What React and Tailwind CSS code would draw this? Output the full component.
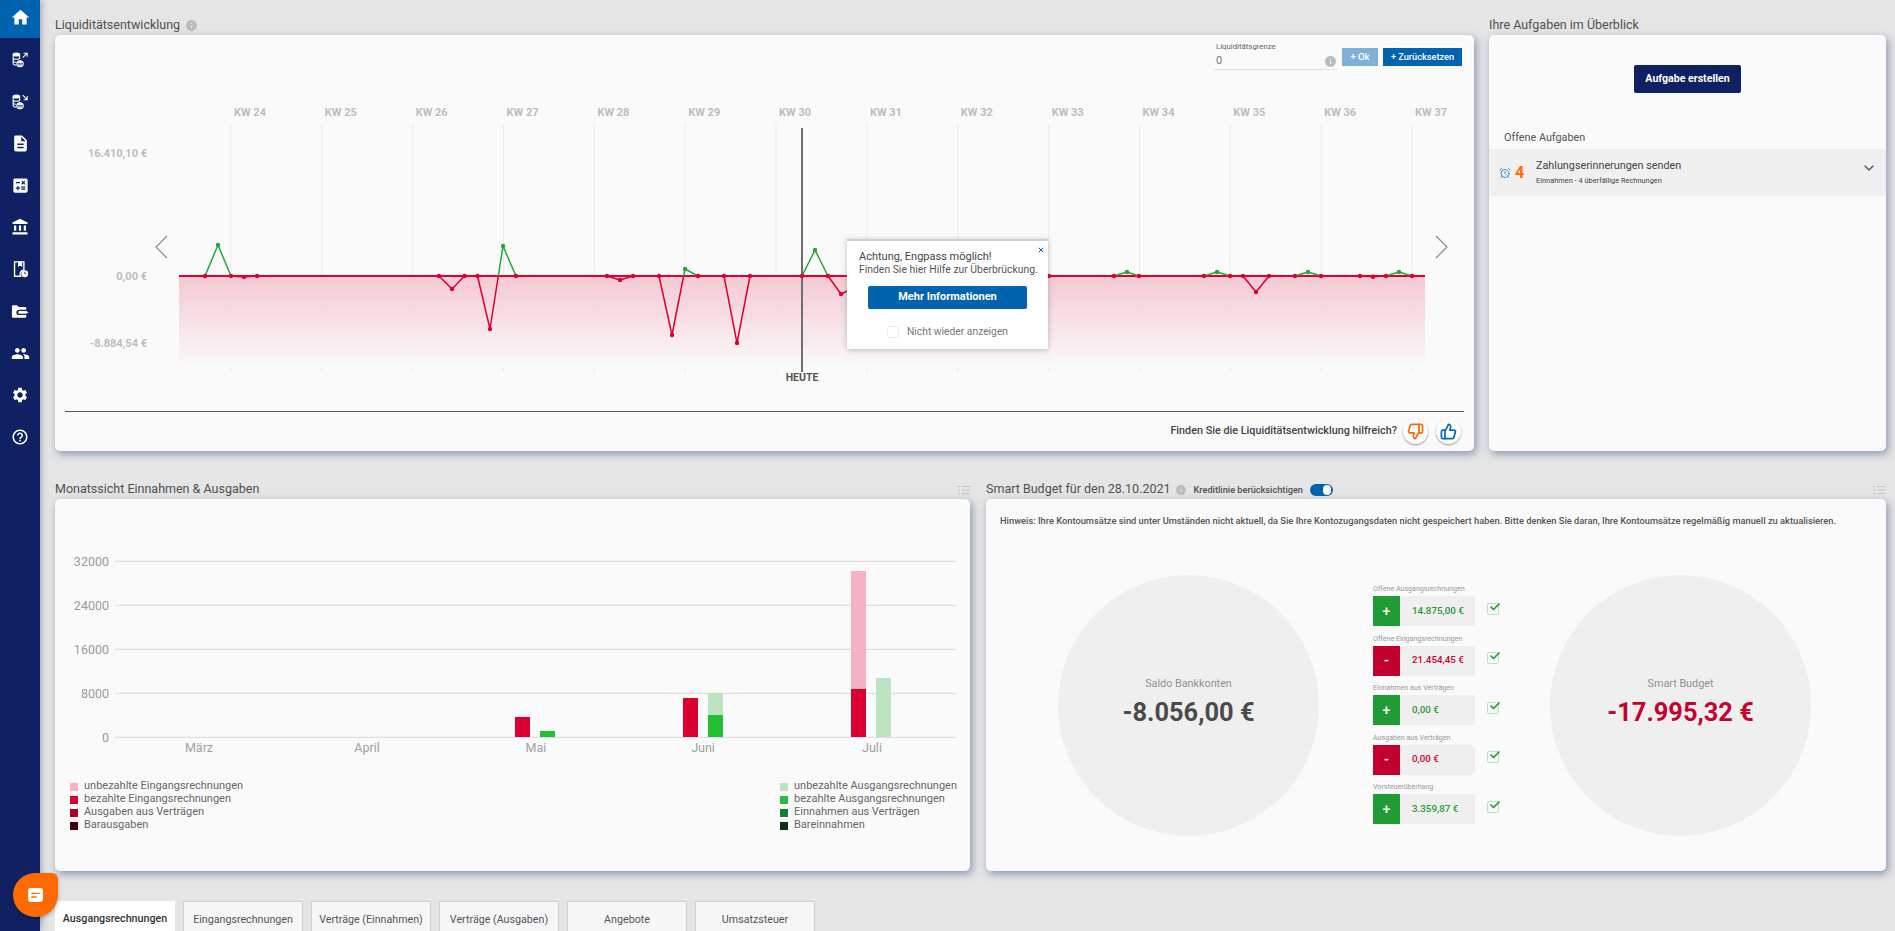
import { ThumbsDown, ThumbsUp, ChevronDown, AlarmClock, Check, X } from "lucide-react";
import {
    MdHome,
    MdDescription,
    MdCalculate,
    MdAccountBalance,
    MdPeople,
    MdSettings,
    MdHelpOutline,
    MdInfo,
} from "react-icons/md";

const ZERO = 276;
const RED = "#dc0032";
const GREEN = "#22a83a";

// Tagespunkte der Liquiditätskurve, jede Gruppe ist ein Linienzug
const curves = [
    [[205, 276], [218, 245], [231, 276], [244, 277], [257, 276]],
    [[439, 276], [452, 289], [464.5, 276], [477.5, 276], [490, 329], [503, 246], [516, 276]],
    [[607, 276], [620, 280], [633, 276]],
    [[659, 276], [672, 335], [685, 269], [698, 276]],
    [[724, 276], [737, 343], [750, 276]],
    [[802, 276], [815, 250], [828, 276], [841, 294], [854, 288], [867, 276]],
    [[1049, 276]],
    [[1114, 276], [1127, 272], [1139, 276]],
    [[1204, 276], [1217, 272], [1230, 276], [1243, 276], [1256, 292], [1269, 276]],
    [[1295, 276], [1308, 272], [1321, 276]],
    [[1360, 276], [1373, 276.7], [1386, 276], [1399, 272], [1412, 276]],
];

function segments(curve) {
    const out = [];
    for (let i = 0; i < curve.length - 1; i++) {
        const [x1, y1] = curve[i];
        const [x2, y2] = curve[i + 1];
        if ((y1 - ZERO) * (y2 - ZERO) < 0) {
            const xm = x1 + ((ZERO - y1) / (y2 - y1)) * (x2 - x1);
            out.push({ x1, y1, x2: xm, y2: ZERO, up: y1 < ZERO });
            out.push({ x1: xm, y1: ZERO, x2, y2, up: y2 < ZERO });
        } else {
            out.push({ x1, y1, x2, y2, up: y1 < ZERO || y2 < ZERO });
        }
    }
    return out;
}

const weeks = [24, 25, 26, 27, 28, 29, 30, 31, 32, 33, 34, 35, 36, 37];

function LiquidityChart() {
    return (
        <svg viewBox="55 100 1419 285" className="block w-[1419px] h-[285px]">
            <defs>
                <linearGradient id="area" x1="0" y1="0" x2="0" y2="1">
                    <stop offset="0" stopColor="#f3c6d1" />
                    <stop offset="1" stopColor="#fafafa" />
                </linearGradient>
            </defs>
            {weeks.map((w, i) => (
                <g key={w}>
                    <line x1={231 + i * 90.85} x2={231 + i * 90.85} y1="123" y2="372" stroke="#ececec" />
                    <text x={250 + i * 90.85} y="116" textAnchor="middle" fontSize="11" fontWeight="700" fill="#bdbdbd">
                        KW {w}
                    </text>
                </g>
            ))}
            <text x="147" y="157" textAnchor="end" fontSize="11" fontWeight="700" fill="#bdbdbd">16.410,10 €</text>
            <text x="147" y="280" textAnchor="end" fontSize="11" fontWeight="700" fill="#bdbdbd">0,00 €</text>
            <text x="147" y="347" textAnchor="end" fontSize="11" fontWeight="700" fill="#bdbdbd">-8.884,54 €</text>

            <rect x="179" y="276" width="1246" height="92" fill="url(#area)" opacity="0.95" />
            <line x1="179" x2="1425" y1="276" y2="276" stroke={RED} strokeWidth="2" />
            <line x1="802" x2="802" y1="128" y2="372" stroke="#6f6f6f" strokeWidth="2" />

            {curves.map((curve, c) => (
                <g key={c}>
                    {segments(curve).map((s, i) => (
                        <line key={i} x1={s.x1} y1={s.y1} x2={s.x2} y2={s.y2} stroke={s.up ? GREEN : RED} strokeWidth="1.5" />
                    ))}
                    {curve.map(([x, y], i) => (
                        <circle key={i} cx={x} cy={y} r="2.2" fill={y < ZERO ? GREEN : RED} />
                    ))}
                </g>
            ))}

            <polyline points="167,236 156,247 167,258" fill="none" stroke="#8a8a8a" strokeWidth="1.2" />
            <polyline points="1436,236 1447,247 1436,258" fill="none" stroke="#8a8a8a" strokeWidth="1.2" />
            <text x="802" y="381" textAnchor="middle" fontSize="10.5" fontWeight="700" fill="#555">HEUTE</text>
        </svg>
    );
}

const yTicks = [
    [561.3, "32000"],
    [605.3, "24000"],
    [649.3, "16000"],
    [693.3, "8000"],
    [737.3, "0"],
];

const months = [
    [199, "März"],
    [367, "April"],
    [536, "Mai"],
    [703, "Juni"],
    [872, "Juli"],
];

const bars = [
    [515, 717, 737, "#dc0032"],
    [540, 731, 737, "#22c033"],
    [683, 698, 737, "#dc0032"],
    [708, 693, 715, "#bce4c2"],
    [708, 715, 737, "#22c033"],
    [851, 571, 689, "#f4b2c2"],
    [851, 689, 737, "#dc0032"],
    [876, 678, 737, "#bce4c2"],
];

function MonthChart() {
    return (
        <svg viewBox="55 499 915 275" className="block w-[915px] h-[275px]">
            {yTicks.map(([y, label]) => (
                <g key={label}>
                    <line x1="115" x2="956" y1={y} y2={y} stroke="#d9d9d9" />
                    <text x="109" y={y + 4.5} textAnchor="end" fontSize="12.5" fill="#9a9a9a">{label}</text>
                </g>
            ))}
            {bars.map(([x, top, bottom, fill], i) => (
                <rect key={i} x={x} y={top} width="15" height={bottom - top} fill={fill} />
            ))}
            {months.map(([x, label]) => (
                <text key={label} x={x} y="752" textAnchor="middle" fontSize="12.5" fill="#a0a0a0">{label}</text>
            ))}
        </svg>
    );
}

function LegendRow({ color, label }) {
    return (
        <div className="flex items-center h-[13px] gap-[6px] whitespace-nowrap">
            <span className={`w-2 h-2 shrink-0 ${color}`} />
            <span>{label}</span>
        </div>
    );
}

function InfoDot({ className }) {
    return <MdInfo className={`text-[#bcbcbc] ${className}`} />;
}

function Coins({ down }) {
    return (
        <svg viewBox="0 0 20 20" className="w-[18px] h-[19px]" fill="none" stroke="#fff" strokeWidth="1.2">
            <ellipse cx="6" cy="4.5" rx="3.6" ry="1.7" fill="#fff" />
            <path d="M2.4 4.5v10c0 1 1.6 1.8 3.6 1.8M9.6 4.5v5M2.4 8c0 1 1.6 1.7 3.6 1.7s3.6-.7 3.6-1.7M2.4 11.5c0 .9 1.2 1.6 3 1.7" />
            <ellipse cx="10" cy="14.7" rx="3.6" ry="3.3" fill="#fff" />
            <path d="M6.6 14.3h6.8M6.8 16h6.4" stroke="#0f2060" strokeWidth="0.8" />
            {down ? <path d="M13 3l5 5M18 4v4h-4" /> : <path d="M13 8l5-5M14 3h4v4" />}
        </svg>
    );
}

function BookClock() {
    return (
        <svg viewBox="0 0 20 20" className="w-[17px] h-[17px]">
            <path d="M3 1h11v9.5a5 5 0 0 0-3.9 7.5H3z" fill="none" stroke="#fff" strokeWidth="1.6" />
            <path d="M7 1h5v6l-2.5-1.6L7 7z" fill="#fff" />
            <circle cx="15" cy="15" r="4" fill="#fff" />
            <path d="M15 12.6V15h2" stroke="#0f2060" strokeWidth="0.9" fill="none" />
        </svg>
    );
}

function FolderPen() {
    return (
        <svg viewBox="0 0 20 16" className="w-[18px] h-[15px]">
            <path d="M1 2.5A1.5 1.5 0 0 1 2.5 1h4.2l2 2h6.800A1.5 1.5 0 0 1 17 4.5V6H9a2.5 2.5 0 0 0 0 6h8v1.5a1.5 1.5 0 0 1-1.5 1.5h-13A1.5 1.5 0 0 1 1 13.5z" fill="#fff" />
            <path d="M9.5 7.5h7.5l2.5 1.5-2.5 1.5H9.500a1.5 1.5 0 0 1 0-3z" fill="#fff" />
        </svg>
    );
}

const navIcons = [
    <MdHome key="home" className="w-[21px] h-[21px] -mt-1" />,
    <Coins key="out" />,
    <Coins key="in" down />,
    <MdDescription key="doc" className="w-[19px] h-[19px]" />,
    <MdCalculate key="calc" className="w-[19px] h-[19px]" />,
    <MdAccountBalance key="bank" className="w-[18px] h-[18px]" />,
    <BookClock key="book" />,
    <FolderPen key="folder" />,
    <MdPeople key="people" className="w-[19px] h-[19px]" />,
    <MdSettings key="settings" className="w-[18px] h-[18px]" />,
    <MdHelpOutline key="help" className="w-[18px] h-[18px]" />,
];

function Sidebar() {
    return (
        <aside className="w-10 shrink-0 h-full bg-[#0f2163] text-white shadow-[2px_0_6px_rgba(60,70,100,0.35)]">
            {navIcons.map((icon, i) => (
                <div
                    key={i}
                    className={`flex items-center justify-center ${i === 0 ? "bg-[#0063b0] h-[38px]" : "h-[42px]"}`}
                >
                    {icon}
                </div>
            ))}
        </aside>
    );
}

const cardClass = "relative rounded-[5px] bg-[#fafafa] shadow-[2px_3px_8px_rgba(55,85,125,0.55)]";

function DragHandle() {
    return (
        <svg viewBox="0 0 12 10" className="w-[12px] h-[10px]" stroke="#c4c4c4" strokeWidth="1.2">
            <path d="M0 1.5h2M0 5h2M0 8.5h2M4 1.5h8M4 5h8M4 8.5h8" />
        </svg>
    );
}

function LiquidityCard() {
    return (
        <div className={`${cardClass} h-[416px]`}>
            <div className="flex justify-end h-[65px] pt-[13px] pr-3 gap-[5px]">
                <div className="w-[123px] h-[22px] relative border-b border-[#e4e4e4]">
                    <div className="text-[7.8px] leading-none text-[#666] ml-[2px] -mt-[5px]">Liquiditätsgrenze</div>
                    <div className="text-[11px] text-[#777] leading-none mt-[4px] ml-[2px]">0</div>
                    <InfoDot className="absolute right-0 top-[7px] w-[13px] h-[13px]" />
                </div>
                <button className="w-9 h-[18px] bg-[#7fb1d8] text-white text-[9.5px] font-medium">+ Ok</button>
                <button className="w-[79px] h-[18px] bg-[#0063b0] text-white text-[9.2px] font-medium">+ Zurücksetzen</button>
            </div>
            <LiquidityChart />
            <div className="mx-[10px] border-t border-[#555] h-0 mt-[26px]" />
            <div className="flex items-center justify-end h-[39px] pr-[13px]">
                <span className="text-[10.8px] font-medium text-[#444] whitespace-nowrap mr-[6px]">
                    Finden Sie die Liquiditätsentwicklung hilfreich?
                </span>
                <button className="w-[25px] h-[25px] rounded-full bg-white flex items-center justify-center shadow-[0_1px_2px_rgba(0,0,0,0.4)] mr-2">
                    <ThumbsDown size={17} className="text-[#ff6900]" strokeWidth={2.4} />
                </button>
                <button className="w-[25px] h-[25px] rounded-full bg-white flex items-center justify-center shadow-[0_1px_2px_rgba(0,0,0,0.4)]">
                    <ThumbsUp size={17} className="text-[#0068b4]" strokeWidth={2.4} />
                </button>
            </div>

            {/* Hinweis-Popup über dem Diagramm */}
            <div className="absolute left-[792px] top-[204px] w-[201px] h-[110px] bg-white border-t-2 border-[#cfcfcf] shadow-[0_1px_6px_rgba(90,90,90,0.35)] text-[#555]">
                <X size={8} strokeWidth={3} className="absolute right-[3px] top-[5px] text-[#0063b0]" />
                <div className="pl-3 pt-[9px] leading-[13px]">
                    <div className="text-[11px] text-[#444]">Achtung, Engpass möglich!</div>
                    <div className="text-[10.4px] whitespace-nowrap">Finden Sie hier Hilfe zur Überbrückung.</div>
                </div>
                <button className="block ml-[21px] mt-[10px] w-[159px] h-[23px] bg-[#0063b0] rounded-[2px] text-white text-[11px] font-bold">
                    Mehr Informationen
                </button>
                <div className="flex items-center mt-[15px] ml-10 gap-2 text-[10.3px] text-[#777]">
                    <span className="w-3 h-3 border border-[#eee] rounded-[2px]" />
                    Nicht wieder anzeigen
                </div>
            </div>
        </div>
    );
}

function TasksCard() {
    return (
        <div className={`${cardClass} h-[416px]`}>
            <div className="flex justify-center pt-[30px]">
                <button className="w-[107px] h-7 bg-[#0f2163] rounded-[2px] text-white text-[10.6px] font-bold">
                    Aufgabe erstellen
                </button>
            </div>
            <div className="mt-[37px] ml-[15px] text-[10.8px] leading-4 text-[#555]">Offene Aufgaben</div>
            <div className="mt-[3px] h-[47px] bg-[#f0f0f0] flex items-center relative">
                <AlarmClock size={12} className="ml-[10px] text-[#3c8ed0]" />
                <span className="ml-[4px] w-[21px] text-[16px] font-bold text-[#ff6900]">4</span>
                <div className="text-[#444]">
                    <div className="text-[10.8px] leading-[13px]">Zahlungserinnerungen senden</div>
                    <div className="text-[7.4px] leading-[13px] mt-[2px]">Einnahmen - 4 überfällige Rechnungen</div>
                </div>
                <ChevronDown size={16} className="absolute right-[9px] top-[11px] text-[#555]" />
            </div>
        </div>
    );
}

function MonthCard() {
    return (
        <div className={`${cardClass} h-[372px]`}>
            <MonthChart />
            <div className="flex justify-between pl-[15px] pr-[12px] pt-[6px] text-[11px] text-[#666]">
                <div className="w-[170px]">
                    <LegendRow color="bg-[#f4b2c2]" label="unbezahlte Eingangsrechnungen" />
                    <LegendRow color="bg-[#dc0032]" label="bezahlte Eingangsrechnungen" />
                    <LegendRow color="bg-[#a8002c]" label="Ausgaben aus Verträgen" />
                    <LegendRow color="bg-[#42000f]" label="Barausgaben" />
                </div>
                <div className="w-[178px]">
                    <LegendRow color="bg-[#bce4c2]" label="unbezahlte Ausgangsrechnungen" />
                    <LegendRow color="bg-[#22c033]" label="bezahlte Ausgangsrechnungen" />
                    <LegendRow color="bg-[#158030]" label="Einnahmen aus Verträgen" />
                    <LegendRow color="bg-[#0a3312]" label="Bareinnahmen" />
                </div>
            </div>
        </div>
    );
}

const budgetRows = [
    { label: "Offene Ausgangsrechnungen", value: "14.875,00 €", plus: true },
    { label: "Offene Eingangsrechnungen", value: "21.454,45 €", plus: false },
    { label: "Einnahmen aus Verträgen", value: "0,00 €", plus: true },
    { label: "Ausgaben aus Verträgen", value: "0,00 €", plus: false },
    { label: "Vorsteuerüberhang", value: "3.359,87 €", plus: true },
];

function BudgetRow({ label, value, plus }) {
    return (
        <div className="h-[49.5px]">
            <div className="text-[7.1px] leading-[13px] text-[#999] whitespace-nowrap">{label}</div>
            <div className="flex items-center mt-[1px]">
                <div className="w-[102px] h-[30px] flex bg-[#efefef] rounded-[1px]">
                    <div
                        className={`w-[27px] flex items-center justify-center text-white text-[14px] font-medium ${plus ? "bg-[#1f9c34]" : "bg-[#c4002e]"}`}
                    >
                        {plus ? "+" : "-"}
                    </div>
                    <div
                        className={`pl-3 flex items-center text-[9.8px] font-medium whitespace-nowrap ${plus ? "text-[#1f9c34]" : "text-[#d00034]"}`}
                    >
                        {value}
                    </div>
                </div>
                <div className="relative ml-3 w-3 h-3 border border-[#b5e4bd] rounded-[2px] -mt-[5px]">
                    <Check size={12} strokeWidth={3.5} className="absolute left-[1px] -top-[3px] text-[#1f9c34]" />
                </div>
            </div>
        </div>
    );
}

function Circle({ label, value, valueClass }) {
    return (
        <div className="w-[261px] h-[261px] shrink-0 rounded-full bg-[#efefef] flex flex-col items-center justify-center pb-2">
            <div className="text-[10.8px] leading-4 text-[#8f8f8f]">{label}</div>
            <div className={`text-[25.4px] font-bold leading-8 mt-[4px] whitespace-nowrap ${valueClass}`}>{value}</div>
        </div>
    );
}

function BudgetCard() {
    return (
        <div className={`${cardClass} h-[372px]`}>
            <div className="pt-[14px] pl-[14px] text-[9.3px] leading-4 font-medium text-[#555] whitespace-nowrap">
                Hinweis: Ihre Kontoumsätze sind unter Umständen nicht aktuell, da Sie Ihre Kontozugangsdaten nicht gespeichert haben. Bitte denken Sie daran, Ihre Kontoumsätze regelmäßig manuell zu aktualisieren.
            </div>
            <div className="flex items-start pl-[72px] mt-[46px]">
                <Circle label="Saldo Bankkonten" value="-8.056,00 €" valueClass="text-[#4a4a4a]" />
                <div className="w-[126px] ml-[54px] mt-[7px] shrink-0">
                    {budgetRows.map((row) => (
                        <BudgetRow key={row.label} {...row} />
                    ))}
                </div>
                <div className="ml-[51px]">
                    <Circle label="Smart Budget" value="-17.995,32 €" valueClass="text-[#c8002f]" />
                </div>
            </div>
        </div>
    );
}

const tabs = ["Ausgangsrechnungen", "Eingangsrechnungen", "Verträge (Einnahmen)", "Verträge (Ausgaben)", "Angebote", "Umsatzsteuer"];

export default function App() {
    return (
        <div className="relative flex h-screen overflow-hidden bg-[#e5e5e5] font-['Roboto',sans-serif]">
            <Sidebar />
            <main className="flex-1 pl-[15px] pt-4">
                <div className="grid grid-cols-[1419px_397px] gap-x-[15px]">
                    <div className="h-[19px] flex items-center gap-[5px] text-[12.5px] text-[#4f4f4f]">
                        Liquiditätsentwicklung <InfoDot className="w-[13px] h-[13px]" />
                    </div>
                    <div className="h-[19px] flex items-center text-[12.5px] text-[#4f4f4f]">Ihre Aufgaben im Überblick</div>
                    <LiquidityCard />
                    <TasksCard />
                </div>

                <div className="grid grid-cols-[915px_900px] gap-x-4 mt-[29px]">
                    <div className="h-[19px] flex items-center justify-between text-[12.5px] text-[#4f4f4f]">
                        Monatssicht Einnahmen & Ausgaben
                        <DragHandle />
                    </div>
                    <div className="h-[19px] flex items-center text-[12.5px] text-[#4f4f4f]">
                        Smart Budget für den 28.10.2021
                        <InfoDot className="w-[12px] h-[12px] ml-[4px]" />
                        <span className="ml-[7px] text-[9.2px] font-medium">Kreditlinie berücksichtigen</span>
                        <span className="ml-[7px] w-[23px] h-3 rounded-full bg-[#0063b0] flex items-center justify-end pr-[2px]">
                            <span className="w-2 h-[10px] rounded-full bg-white" />
                        </span>
                        <span className="ml-auto mr-[1px]">
                            <DragHandle />
                        </span>
                    </div>
                    <MonthCard />
                    <BudgetCard />
                </div>

                <div className="flex gap-2 mt-[30px]">
                    {tabs.map((tab, i) => (
                        <div
                            key={tab}
                            className={`w-[120px] h-[40px] pt-[10px] text-center text-[10.7px] whitespace-nowrap ${i === 0 ? "bg-white text-[#333] font-medium" : "bg-[#f6f6f6] text-[#555] border border-b-0 border-[#cfcfcf]"}`}
                        >
                            {tab}
                        </div>
                    ))}
                </div>
            </main>

            <button className="absolute left-[13px] top-[873px] w-[45px] h-[44px] bg-[#ff6900] rounded-[22px] rounded-tr-[6px] flex items-center justify-center shadow-[0_2px_4px_rgba(0,0,0,0.25)]">
                <svg viewBox="0 0 16 16" className="w-[17px] h-[17px]">
                    <path d="M3 1h10a2 2 0 0 1 2 2v8a3 3 0 0 1-3 3H4a3 3 0 0 1-3-3V3a2 2 0 0 1 2-2z" fill="#fff" />
                    <path d="M4 6h8M4 9.5h5" stroke="#ff6900" strokeWidth="1.4" />
                </svg>
            </button>
        </div>
    );
}
